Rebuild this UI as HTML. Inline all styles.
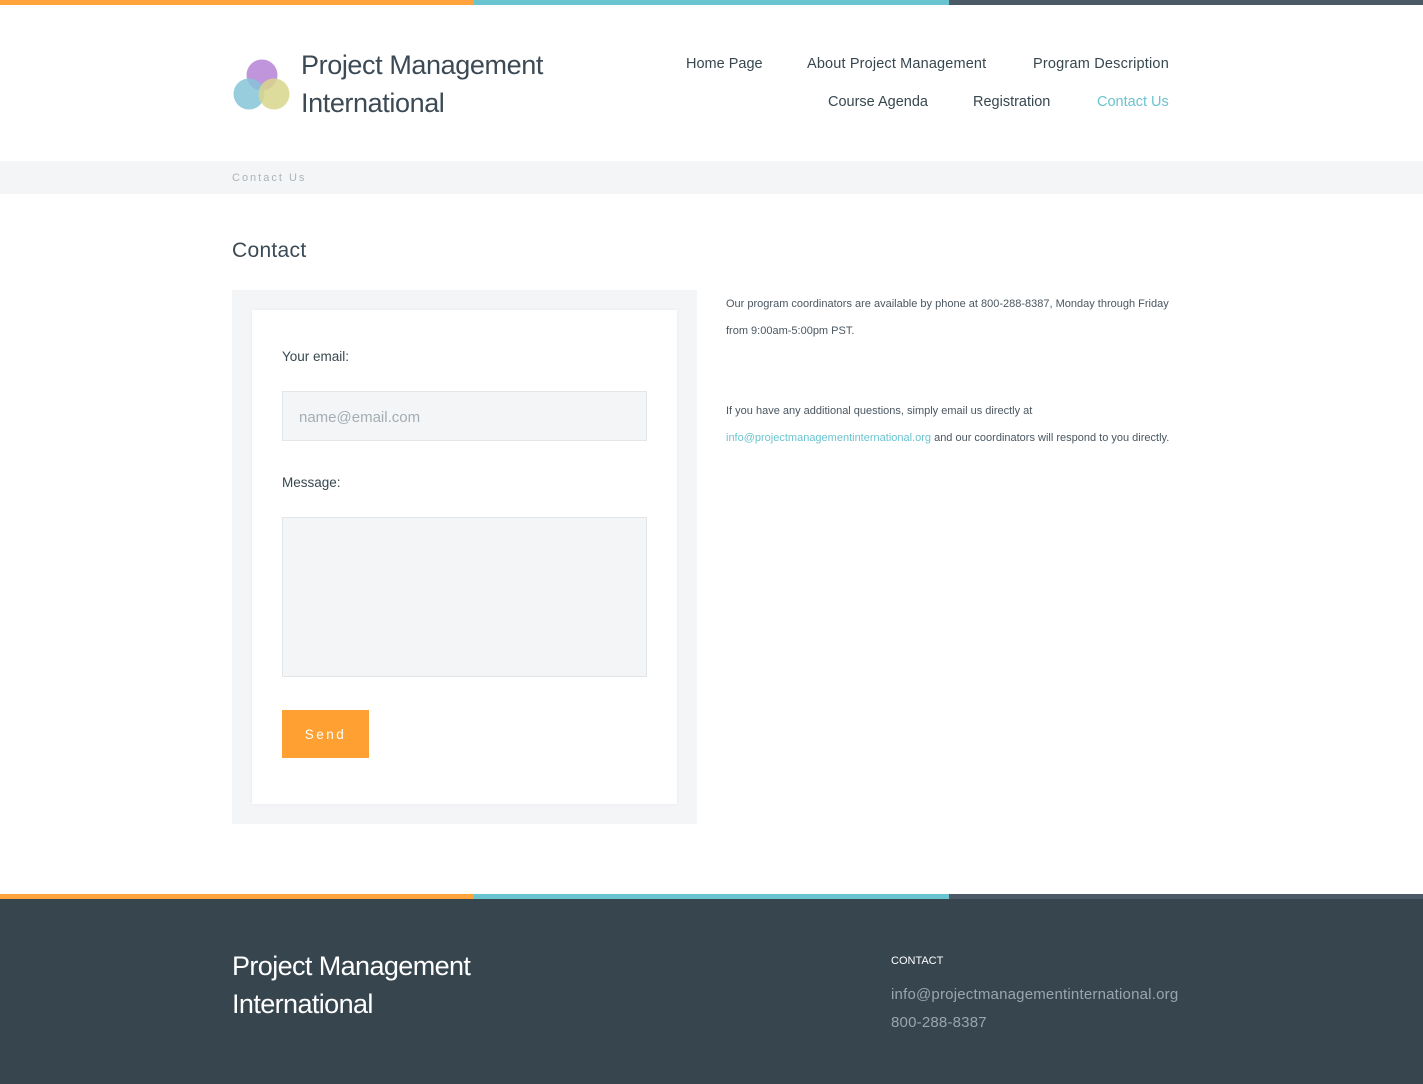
<!DOCTYPE html>
<html><head><meta charset="utf-8"><style>
*{margin:0;padding:0;box-sizing:border-box}
body{width:1423px;height:1084px;background:#fff;font-family:"Liberation Sans",sans-serif;color:#37474f;position:relative;overflow:hidden}
.bar{position:absolute;left:0;width:1423px;height:5px;display:flex}
.bar div{flex:0 0 auto;height:100%}
.a{position:absolute}
.nav{font-size:14.5px;color:#37474f;top:0}
</style></head><body>
<div class="bar" style="top:0"><div style="width:474px;background:#ffa33d"></div><div style="width:475px;background:#6ac4cf"></div><div style="width:474px;background:#4b5a66"></div></div>
<svg class="a" style="left:232px;top:57px" width="62" height="56"><circle cx="30" cy="18" r="15.5" fill="#b98ad8" opacity=".9"/><circle cx="17" cy="37" r="15.5" fill="#86c4d8" opacity=".85"/><circle cx="42" cy="37" r="15.5" fill="#d8d68c" opacity=".85"/></svg>
<div class="a" style="left:301px;top:46px;font-size:27px;line-height:38px;letter-spacing:-0.4px;color:#3c4a55">Project Management<br>International</div>
<div class="a nav" style="left:686px;top:56px">Home Page</div>
<div class="a nav" style="left:807px;top:56px;letter-spacing:0.15px">About Project Management</div>
<div class="a nav" style="left:1033px;top:56px;letter-spacing:0.2px">Program Description</div>
<div class="a nav" style="left:828px;top:94px">Course Agenda</div>
<div class="a nav" style="left:973px;top:94px">Registration</div>
<div class="a nav" style="left:1097px;top:94px;color:#6ac4cf">Contact Us</div>
<div class="a" style="left:0;top:161px;width:1423px;height:33px;background:#f4f5f7"></div>
<div class="a" style="left:232px;top:172px;font-size:11px;letter-spacing:2px;color:#aab4ba">Contact Us</div>
<div class="a" style="left:232px;top:239px;font-size:21px;color:#3c4a55;letter-spacing:0.3px">Contact</div>
<div class="a" style="left:232px;top:290px;width:465px;height:534px;background:#f4f5f7"></div>
<div class="a" style="left:252px;top:310px;width:425px;height:494px;background:#fff;box-shadow:0 0 3px rgba(0,0,0,.06)"></div>
<div class="a" style="left:282px;top:349px;font-size:13.5px">Your email:</div>
<div class="a" style="left:282px;top:391px;width:365px;height:50px;background:#f4f5f7;border:1px solid #e3e6e8;font-size:15px;color:#a3adb3;padding:17px 0 0 16px">name@email.com</div>
<div class="a" style="left:282px;top:475px;font-size:13.5px">Message:</div>
<div class="a" style="left:282px;top:517px;width:365px;height:160px;background:#f4f5f7;border:1px solid #e3e6e8"></div>
<div class="a" style="left:282px;top:710px;width:87px;height:48px;background:#ffa033;color:#fff;font-size:13.5px;letter-spacing:2.5px;text-align:center;line-height:49px">Send</div>
<div class="a" style="left:726px;top:291px;font-size:11px;line-height:27px;color:#4a5660;letter-spacing:0px;white-space:nowrap">Our program coordinators are available by phone at 800-288-8387, Monday through Friday<br>from 9:00am-5:00pm PST.</div>
<div class="a" style="left:726px;top:398px;font-size:11px;line-height:27px;color:#4a5660;letter-spacing:0px;white-space:nowrap">If you have any additional questions, simply email us directly at<br><span style="color:#6ac4cf">info@projectmanagementinternational.org</span> and our coordinators will respond to you directly.</div>
<div class="a" style="left:0;top:894px;width:1423px;height:190px;background:#37454f"></div>
<div class="bar" style="top:894px"><div style="width:474px;background:#ffa33d"></div><div style="width:475px;background:#6ac4cf"></div><div style="width:474px;background:#4b5a66"></div></div>
<div class="a" style="left:232px;top:947px;font-size:27px;line-height:38px;letter-spacing:-0.6px;color:#fff">Project Management<br>International</div>
<div class="a" style="left:891px;top:955px;font-size:11px;color:#fff">CONTACT</div>
<div class="a" style="left:891px;top:981px;font-size:15px;line-height:28px;color:#9aa5ad;letter-spacing:0.2px">info@projectmanagementinternational.org<br>800-288-8387</div>
</body></html>
